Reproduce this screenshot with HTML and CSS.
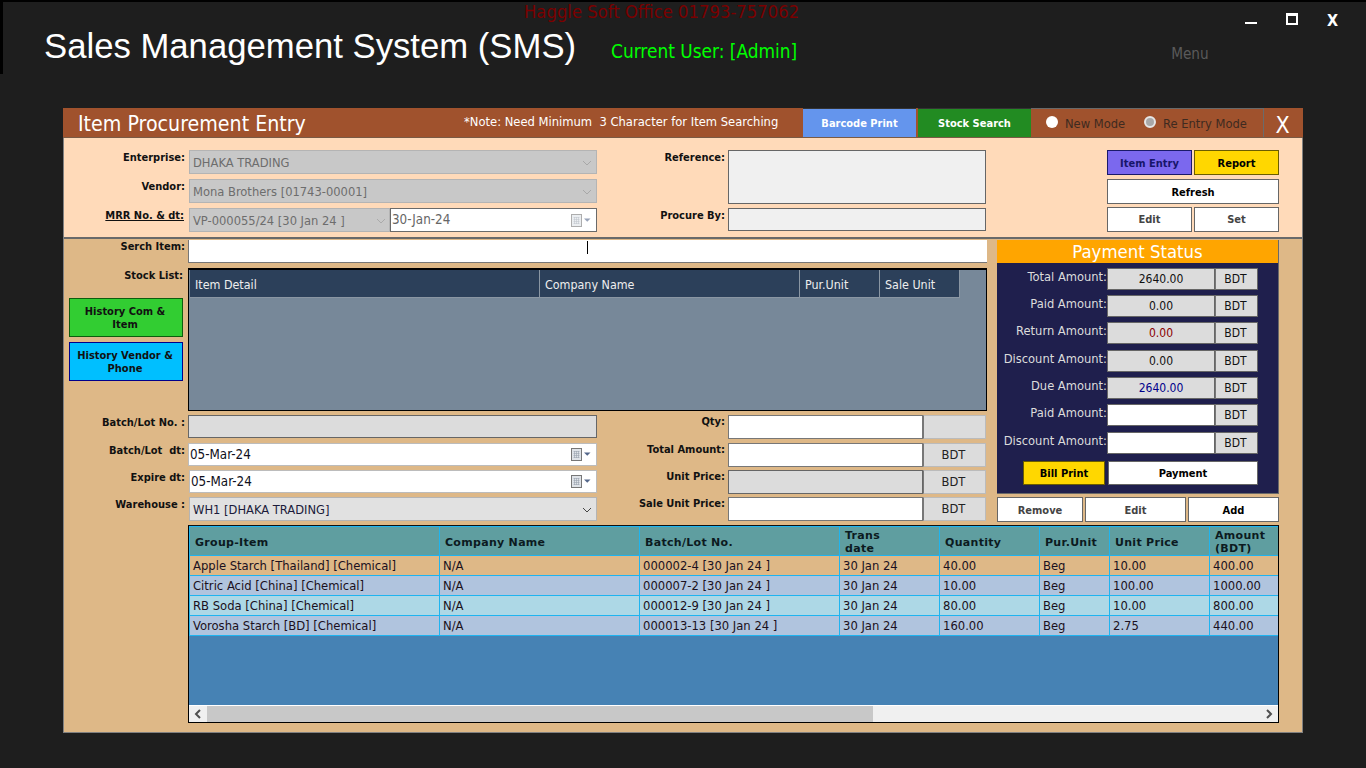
FILE: index.html
```html
<!DOCTYPE html>
<html lang="en">
<head>
<meta charset="utf-8">
<title>Sales Management System (SMS)</title>
<link rel="stylesheet" href="styles.css">
</head>
<body>
<svg class="defs" width="0" height="0" aria-hidden="true">
  <symbol id="chev" viewBox="0 0 10 6"><path d="M1 1l4 4 4-4" fill="none" stroke="currentColor" stroke-width="1"/></symbol>
  <symbol id="cal" viewBox="0 0 20 13">
    <rect x="0.5" y="0.5" width="10" height="12" fill="#dfe3e8" stroke="#777"/>
    <path d="M2.5 3.5h6M2.5 5.5h6M2.5 7.5h6M2.5 9.5h6M3.5 3v7M5.5 3v7M7.5 3v7" stroke="#9aa3ae" stroke-width=".6" fill="none"/>
    <path d="M13 4.5h6.5l-3.25 3.25z" fill="#54678a"/>
  </symbol>
</svg>
<header class="app-head">
  <div class="head-top">
    <span class="brand-note">Haggle Soft Office 01793-757062</span>
    <div class="win-ctrls">
      <span class="win-min"></span>
      <span class="win-max"></span>
      <span class="win-close">X</span>
    </div>
  </div>
  <div class="head-main">
    <h1 class="app-title">Sales Management System (SMS)</h1>
    <span class="cur-user">Current User: [Admin]</span>
    <span class="menu-link">Menu</span>
  </div>
</header>

<main class="panel">
  <div class="title-bar">
    <h2 class="panel-title">Item Procurement Entry</h2>
    <span class="note">*Note: Need Minimum&nbsp; 3 Character for Item Searching</span>
    <button class="tb-btn tb-blue">Barcode Print</button>
    <button class="tb-btn tb-green">Stock Search</button>
    <div class="modes">
      <span class="radio"></span><span class="mode-txt mode-new">New Mode</span>
      <span class="radio radio-on"></span><span class="mode-txt">Re Entry Mode</span>
    </div>
    <span class="panel-close">X</span>
  </div>

  <section class="form-top">
    <label class="lbl">Enterprise:</label>
    <div class="fld select off">DHAKA TRADING<svg class="chev"><use href="#chev"/></svg></div>
    <label class="lbl lbl-ref">Reference:</label>
    <div class="fld area"></div>
    <div class="spacer"></div>
    <div class="btn-pair">
      <button class="btn b-purple">Item Entry</button>
      <button class="btn b-gold">Report</button>
    </div>

    <label class="lbl">Vendor:</label>
    <div class="fld select off">Mona Brothers [01743-00001]<svg class="chev"><use href="#chev"/></svg></div>
    <div class="spacer"></div>
    <div class="spacer"></div>
    <div class="btn-pair"><button class="btn b-white full">Refresh</button></div>

    <label class="lbl lbl-u">MRR No. &amp; dt:</label>
    <div class="mrr">
      <div class="fld select off mrr-sel">VP-000055/24 [30 Jan 24 ]<svg class="chev"><use href="#chev"/></svg></div>
      <div class="fld date dim">30-Jan-24<svg class="cal"><use href="#cal"/></svg></div>
    </div>
    <label class="lbl lbl-ref">Procure By:</label>
    <div class="fld ro-light"></div>
    <div class="spacer"></div>
    <div class="btn-pair raise">
      <button class="btn b-white soft">Edit</button>
      <button class="btn b-white soft">Set</button>
    </div>
  </section>

  <section class="form-low">
    <label class="lbl lbl-l">Serch Item:</label>
    <div class="fld search span3"><span class="caret"></span></div>
    <aside class="payment-col">
      <div class="payment">
        <h3 class="pay-head">Payment Status</h3>
        <div class="pay-grid">
          <span class="pay-lbl">Total Amount:</span><div class="pay-val">2640.00</div><div class="pay-unit">BDT</div>
          <span class="pay-lbl">Paid Amount:</span><div class="pay-val">0.00</div><div class="pay-unit">BDT</div>
          <span class="pay-lbl">Return Amount:</span><div class="pay-val red">0.00</div><div class="pay-unit">BDT</div>
          <span class="pay-lbl">Discount Amount:</span><div class="pay-val">0.00</div><div class="pay-unit">BDT</div>
          <span class="pay-lbl">Due Amount:</span><div class="pay-val blue">2640.00</div><div class="pay-unit">BDT</div>
          <span class="pay-lbl">Paid Amount:</span><div class="pay-val white"></div><div class="pay-unit">BDT</div>
          <span class="pay-lbl">Discount Amount:</span><div class="pay-val white"></div><div class="pay-unit">BDT</div>
        </div>
        <div class="pay-actions">
          <button class="btn b-gold flat">Bill Print</button>
          <button class="btn b-white pay-btn">Payment</button>
        </div>
      </div>
    </aside>

    <div class="stock-left">
      <label class="lbl lbl-s">Stock List:</label>
      <button class="hist h-green">History Com &amp; Item</button>
      <button class="hist h-blue">History Vendor &amp; Phone</button>
    </div>
    <div class="stock-grid span3">
      <div class="sg-head">
        <span class="sg-c sg-1">Item Detail</span>
        <span class="sg-c sg-2">Company Name</span>
        <span class="sg-c sg-3">Pur.Unit</span>
        <span class="sg-c sg-3">Sale Unit</span>
      </div>
    </div>

    <label class="lbl lbl-l">Batch/Lot No. :</label>
    <div class="fld ro mid">&nbsp;</div>
    <label class="lbl lbl-ref">Qty:</label>
    <div class="pair"><div class="fld plain"></div><div class="fld unit"></div></div>

    <label class="lbl lbl-l">Batch/Lot&nbsp; dt:</label>
    <div class="fld date mid">05-Mar-24<svg class="cal"><use href="#cal"/></svg></div>
    <label class="lbl lbl-ref">Total Amount:</label>
    <div class="pair"><div class="fld plain"></div><div class="fld unit">BDT</div></div>

    <label class="lbl lbl-l">Expire dt:</label>
    <div class="fld date mid inset">05-Mar-24<svg class="cal"><use href="#cal"/></svg></div>
    <label class="lbl lbl-ref">Unit Price:</label>
    <div class="pair"><div class="fld ro"></div><div class="fld unit">BDT</div></div>

    <label class="lbl lbl-l">Warehouse :</label>
    <div class="fld select wh mid inset">WH1 [DHAKA TRADING]<svg class="chev"><use href="#chev"/></svg></div>
    <label class="lbl lbl-ref">Sale Unit Price:</label>
    <div class="pair"><div class="fld plain"></div><div class="fld unit">BDT</div></div>
    <div class="row-actions">
      <button class="btn b-white soft ra-1">Remove</button>
      <button class="btn b-white soft ra-2">Edit</button>
      <button class="btn b-white ra-3">Add</button>
    </div>
  </section>

  <section class="tbl-wrap">
    <div class="tbl-body">
      <table class="items">
        <colgroup>
          <col class="c250"><col class="c200"><col class="c200"><col class="c100"><col class="c100"><col class="c70"><col class="c100"><col class="c70">
        </colgroup>
        <thead>
          <tr><th>Group-Item</th><th>Company Name</th><th>Batch/Lot No.</th><th>Trans<br>date</th><th>Quantity</th><th>Pur.Unit</th><th>Unit Price</th><th>Amount (BDT)</th></tr>
        </thead>
        <tbody>
          <tr class="r-tan"><td>Apple Starch [Thailand] [Chemical]</td><td>N/A</td><td>000002-4 [30 Jan 24 ]</td><td>30 Jan 24</td><td>40.00</td><td>Beg</td><td>10.00</td><td>400.00</td></tr>
          <tr class="r-steel"><td>Citric Acid [China] [Chemical]</td><td>N/A</td><td>000007-2 [30 Jan 24 ]</td><td>30 Jan 24</td><td>10.00</td><td>Beg</td><td>100.00</td><td>1000.00</td></tr>
          <tr class="r-light"><td>RB Soda [China] [Chemical]</td><td>N/A</td><td>000012-9 [30 Jan 24 ]</td><td>30 Jan 24</td><td>80.00</td><td>Beg</td><td>10.00</td><td>800.00</td></tr>
          <tr class="r-steel"><td>Vorosha Starch [BD] [Chemical]</td><td>N/A</td><td>000013-13 [30 Jan 24 ]</td><td>30 Jan 24</td><td>160.00</td><td>Beg</td><td>2.75</td><td>440.00</td></tr>
        </tbody>
      </table>
    </div>
    <div class="hscroll">
      <span class="sb-arrow"><svg width="8" height="10" viewBox="0 0 8 10"><path d="M6 1L2 5l4 4" fill="none" stroke="#505050" stroke-width="2"/></svg></span>
      <span class="sb-thumb"></span>
      <span class="sb-arrow sb-right"><svg width="8" height="10" viewBox="0 0 8 10"><path d="M2 1l4 4-4 4" fill="none" stroke="#505050" stroke-width="2"/></svg></span>
    </div>
  </section>
</main>
</body>
</html>
```
FILE: styles.css
```css
* { box-sizing: border-box; }
html, body { margin: 0; padding: 0; }
body {
  width: 1366px; height: 768px; overflow: hidden;
  background: #1e1e1e;
  font: 12.8px "DejaVu Sans Condensed", "DejaVu Sans", sans-serif;
  color: #000;
}
.defs { position: absolute; }
button { font-family: inherit; cursor: pointer; padding: 0; }
h1, h2, h3 { margin: 0; font-weight: normal; }

/* app header */
.app-head { height: 108px; border-top: 2px solid #000; }
.head-top { display: flex; height: 23px; padding-left: 524px; }
.brand-note { color: #7a0000; font-size: 18.3px; line-height: 20px; white-space: nowrap; }
.win-ctrls { margin-left: auto; display: flex; align-items: flex-start; padding-top: 10px; }
.win-min { width: 12px; height: 2px; background: #fff; margin: 10px 29px 0 0; }
.win-max { width: 12px; height: 12px; border: 2px solid #fff; border-top-width: 3px; margin: 1px 29px 0 0; }
.win-close { color: #fff; font-weight: bold; font-size: 16px; line-height: 15px; margin-top: 1px; width: 39px; }
.head-main { display: flex; align-items: flex-start; height: 49px; padding-left: 44px; position: relative; }
.head-main::before { content: ""; position: absolute; left: 0; top: -25px; width: 3px; height: 74px; background: #000; }
.app-title { font: 34.7px/42px "Liberation Sans", Arial, sans-serif; color: #fff; white-space: nowrap; }
.cur-user { color: #00ff00; font-size: 18.9px; line-height: 22px; margin: 15px 0 0 35px; white-space: nowrap; }
.menu-link { color: #5a5a5a; font-size: 15.2px; line-height: 18px; margin: 20px 0 0 374px; }

/* panel */
.panel {
  width: 1240px; height: 625px; margin-left: 63px;
  background: #deb887; border: 1px solid #808080; border-top: 0;
  display: flex; flex-direction: column;
}
.title-bar {
  display: flex; align-items: stretch; height: 30px; background: #a0522d; color: #fff;
  border-bottom: 1px solid #7a5a44; margin: 0 -1px;
}
.panel-title { font-size: 21.2px; line-height: 32px; width: 386px; padding-left: 15px; white-space: nowrap; }
.note { font-size: 12.85px; line-height: 28px; width: 354px; white-space: nowrap; padding-left: 15px; }
.tb-btn { border: 0; border-top: 1px solid #333; color: #fff; font-weight: bold; font-size: 11px; }
.tb-blue { background: #6495ed; width: 113px; }
.tb-green { background: #228b22; width: 113px; margin-left: 2px; }
.modes { display: flex; align-items: center; width: 233px; border-top: 1px solid #696969; border-right: 1px solid #6b6b6b; padding-left: 15px; }
.radio { width: 12px; height: 12px; border-radius: 50%; background: #fff; flex: none; margin-top: -2px; }
.radio-on { background: #a8a8a8; border: 2px solid #e6e6e6; }
.mode-txt { color: #3e2a20; margin-left: 7px; font-size: 12.8px; white-space: nowrap; }
.mode-new { width: 79px; }
.panel-close { flex: 1; font-size: 23px; line-height: 34px; text-align: center; color: #fff; padding-right: 2px; }

/* fields */
.lbl { font-weight: bold; font-size: 11px; line-height: 13px; text-align: right; white-space: nowrap; padding-right: 4px; color: #111; }
.lbl-ref { padding-right: 3px; }
.lbl-u { text-decoration: underline; padding-right: 5px; }
.fld { height: 24px; line-height: 22px; border: 1px solid #777; white-space: nowrap; display: flex; align-items: center; }
.select { padding-left: 3px; padding-top: 1px; }
.off { background: #c8c8c8; border: 1px solid #b4b4b4; color: #6d6d6d; }
.chev { width: 10px; height: 6px; margin-left: auto; margin-right: 4px; color: #a8a8a8; flex: none; }
.wh { background: #e1e1e1; border-color: #b4b4b4; color: #1b1b3a; }
.wh .chev { color: #444; }
.date { background: #fff; border-color: #bcbcbc; padding-left: 1px; color: #101020; height: 23px; font-size: 13.3px; }
.dim { border-color: #6a6a6a; color: #666; }
.dim .cal { opacity: .6; }
.cal { width: 20px; height: 13px; margin-left: auto; margin-right: 5px; flex: none; }
.area { background: #f0f0f0; border-color: #666; grid-row: span 2; height: 54px; }
.ro-light { background: #f0f0f0; border-color: #666; height: 23px; }
.ro { background: #dcdcdc; border-color: #666; height: 23px; }
.plain { background: #fff; border-color: #777; flex: 1; }
.unit { background: #dcdcdc; border-color: #bbb; border-left: 1px solid #777; width: 63px; justify-content: center; flex: none; color: #222; padding-right: 2px; }
.pair { display: flex; height: 24px; width: 258px; }
.pair .ro { flex: 1; height: 24px; }
.spacer { min-width: 0; }

/* top form */
.form-top {
  height: 101px; background: #ffdab9; border-bottom: 2px solid #696969; padding-top: 12px;
  display: grid; grid-template-columns: 125px 408px 131px 258px 121px 172px; grid-auto-rows: 29px; align-items: start;
}
.form-top .lbl { padding-top: 1px; }
.mrr { display: flex; }
.mrr-sel { width: 201px; }
.mrr .chev { margin-right: 3px; color: #aaa; }
.mrr .date { flex: 1; height: 24px; }
.btn-pair { display: flex; justify-content: space-between; width: 172px; }
.raise { margin-top: -1px; }
.btn { height: 25px; font-size: 11px; font-weight: bold; width: 85px; padding-top: 1px; }
.raise .btn { padding-top: 0; }
.b-purple { background: #7b68ee; border: 1px solid #1a1a6a; color: #17156a; }
.b-gold { background: #ffd700; border: 1px solid #6b5d00; color: #000; }
.b-white { background: #fff; border: 1px solid #666; color: #000; }
.soft { color: #444; }
.full { width: 100%; }

/* lower form */
.form-low {
  display: grid; grid-template-columns: 124px 409px 131px 258px 11px 282px; grid-template-rows: 29px 147px 28px 27px 27px 28px;
  align-items: start;
}
.lbl-l { grid-column: 1; padding-top: 1px; padding-right: 3px; }
.span3 { grid-column: 2 / span 3; }
.mid { grid-column: 2; }
.inset { margin-left: 1px; }
.form-low > .lbl-ref { grid-column: 3; }
.form-low > .pair { grid-column: 4; }
.search { background: #fff; border: 0; border-bottom: 1px solid #777; border-left: 1px solid #777; height: 23px; margin-top: 1px; width: 799px; position: relative; }
.caret { position: absolute; left: 398px; top: 1px; width: 1px; height: 13px; background: #000; }
.payment-col { grid-column: 6; grid-row: 1 / span 5; }
.payment { background: #1f1f4d; height: 254px; margin-top: 1px; border-bottom: 1px solid #696969; border-right: 1px solid #696969; width: 282px; }
.pay-head { height: 23px; background: #ffa500; color: #fff; font-size: 18.4px; line-height: 24px; text-align: center; }
.pay-grid { display: grid; grid-template-columns: 110px 108px 43px; grid-template-rows: 22px 22px 23px 22px 22px 23px 22px; row-gap: 5px; padding-top: 5px; }
.pay-lbl { color: #dcdcdc; text-align: right; line-height: 17px; white-space: nowrap; }
.pay-val, .pay-unit { height: 22px; background: #dcdcdc; border: 1px solid #666; text-align: center; line-height: 21px; color: #111; font-size: 12px; }
.pay-unit { border-left: 1px solid #777; padding-right: 2px; }
.pay-val.white { background: #fff; }
.red { color: #8b0000; }
.blue { color: #00008b; }
.pay-actions { display: flex; padding: 7px 0 0 26px; gap: 3px; }
.flat { width: 82px; height: 24px; }
.pay-btn { width: 150px; height: 24px; }

.stock-left { grid-column: 1; display: flex; flex-direction: column; align-items: flex-end; }
.lbl-s { padding-top: 1px; padding-right: 5px; }
.hist { width: 114px; height: 39px; font-size: 11px; font-weight: bold; line-height: 13px; padding: 0 9px 0 7px; margin-right: 5px; color: #111; }
.h-green { background: #32cd32; border: 1px solid #0d5c0d; margin-top: 16px; }
.h-blue { background: #00bfff; border: 1px solid #00008b; margin-top: 5px; }
.stock-grid { height: 143px; width: 799px; background: #778899; border: 1px solid #000; border-top-width: 2px; padding-left: 1px; }
.sg-head { display: flex; height: 28px; }
.sg-c { background: #2c405a; color: #eee; font-size: 12.4px; line-height: 30px; padding-left: 5px; border-right: 1px solid #8a96a3; border-bottom: 1px solid #8a96a3; white-space: nowrap; }
.sg-1 { width: 350px; }
.sg-2 { width: 260px; }
.sg-3 { width: 80px; }
.row-actions { grid-column: 6; grid-row: 6; display: flex; height: 25px; gap: 2px; }
.ra-1 { width: 86px; }
.ra-2 { width: 101px; }
.ra-3 { width: 91px; }

/* items table */
.tbl-wrap { width: 1091px; height: 198px; margin: 0 0 0 124px; border: 1px solid #000; border-top-color: #111; display: flex; flex-direction: column; }
.tbl-body { flex: 1; background: #4682b4; border-bottom: 1px solid #fff; overflow: hidden; }
.items { border-collapse: collapse; table-layout: fixed; width: 1090px; }
.c250 { width: 250px; } .c200 { width: 200px; } .c100 { width: 100px; } .c70 { width: 70px; }
.items th, .items td { border: 1px solid #1eb4f0; text-align: left; }
.items th { background: #5f9ea0; color: #0c1a20; height: 29px; padding: 2px 5px 0; font: bold 11px/13px "DejaVu Sans", Verdana, sans-serif; letter-spacing: .3px; }
.items td { height: 20px; padding: 0 3px; font-size: 12.9px; line-height: 18px; color: #1b1020; white-space: nowrap; overflow: hidden; }
.r-tan td { background: #deb887; }
.r-steel td { background: #b0c4de; }
.r-light td { background: #add8e6; }
.hscroll { height: 16px; background: #f0f0f0; display: flex; align-items: stretch; }
.sb-arrow { width: 18px; display: flex; align-items: center; justify-content: center; flex: none; }
.sb-thumb { width: 666px; background: #c8c8c8; }
.sb-right { margin-left: auto; }
```
